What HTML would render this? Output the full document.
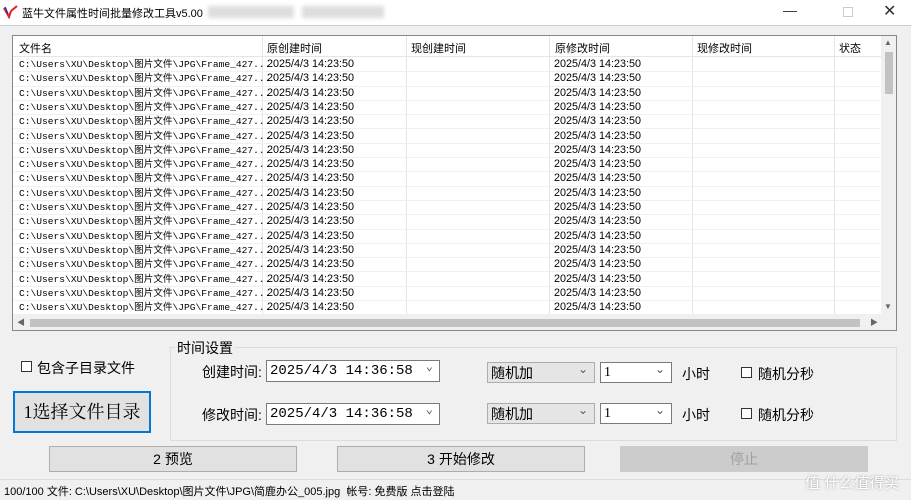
<!DOCTYPE html><html><head><meta charset="utf-8"><style>
*{margin:0;padding:0;box-sizing:border-box}
body{width:911px;height:500px;background:#f0f0f0;font-family:"Liberation Sans","Noto Sans CJK SC",sans-serif;position:relative;overflow:hidden;color:#000}
.a{position:absolute}
.t{font-size:12px;white-space:nowrap}
.row{position:absolute;left:0;height:14.3px;width:868px;border-bottom:1px solid #f0f0f0}
.cell{position:absolute;top:0;line-height:13px;white-space:nowrap}
.mono{font-family:"Liberation Mono","Noto Sans CJK SC",monospace;font-size:9.6px}
.dt{font-size:10.8px}
.btn{position:absolute;background:#e1e1e1;border:1px solid #adadad;font-size:14px;text-align:center}
.combo{position:absolute;background:#fff;border:1px solid #7a7a7a;font-size:14px;padding-left:3px;line-height:20px;font-family:"Liberation Mono","Noto Sans CJK SC",monospace}
.combo::after{content:"⌄";position:absolute;right:6px;top:-4px;font-size:12px;color:#555}
.cb{position:absolute;width:11px;height:11px;border:1px solid #333;background:#fff}
</style></head><body>
<div class="a" style="left:0;top:0;width:911px;height:25px;background:#fff"></div>
<svg class="a" style="left:3px;top:5px" width="16" height="14"><path d="M1 3 L6 12 L8 6 M8 6 L14 1" stroke="#d22" stroke-width="2" fill="none"/><path d="M2 2 L5 9" stroke="#23a" stroke-width="1.5"/></svg>
<div class="a t" style="left:22px;top:5px;font-size:11px">蓝牛文件属性时间批量修改工具v5.00</div>
<div class="a" style="left:208px;top:6px;width:86px;height:12px;background:#ddd;filter:blur(2px)"></div>
<div class="a" style="left:302px;top:6px;width:82px;height:12px;background:#ddd;filter:blur(2px)"></div>
<div class="a t" style="left:783px;top:2px;font-size:14px;color:#333">—</div>
<div class="a" style="left:843px;top:7px;width:10px;height:10px;border:1px solid #ccc"></div>
<div class="a t" style="left:883px;top:1px;font-size:16px;color:#333">✕</div>
<div class="a" style="left:0;top:25px;width:911px;height:1px;background:#ccc"></div>

<div class="a" style="left:12px;top:35px;width:885px;height:296px;background:#fff;border:1px solid #828790;overflow:hidden">
<div class="a" style="left:0;top:0;width:868px;height:21px;border-bottom:1px solid #e5e5e5">
<div class="a t" style="left:6px;top:4px;font-size:11px">文件名</div>
<div class="a t" style="left:254px;top:4px;font-size:11px">原创建时间</div>
<div class="a t" style="left:398px;top:4px;font-size:11px">现创建时间</div>
<div class="a t" style="left:542px;top:4px;font-size:11px">原修改时间</div>
<div class="a t" style="left:684px;top:4px;font-size:11px">现修改时间</div>
<div class="a t" style="left:826px;top:4px;font-size:11px">状态</div>
</div>
<div class="a" style="left:249px;top:0;width:1px;height:278px;background:#e5e5e5"></div>
<div class="a" style="left:393px;top:0;width:1px;height:278px;background:#e5e5e5"></div>
<div class="a" style="left:536px;top:0;width:1px;height:278px;background:#e5e5e5"></div>
<div class="a" style="left:679px;top:0;width:1px;height:278px;background:#e5e5e5"></div>
<div class="a" style="left:821px;top:0;width:1px;height:278px;background:#e5e5e5"></div>
<div id="rows"></div>
<div class="a" style="left:868px;top:0;width:16px;height:278px;background:#f0f0f0"></div>
<div class="a" style="left:872px;top:16px;width:8px;height:42px;background:#c2c2c2"></div>
<div class="a t" style="left:871px;top:2px;font-size:8px;color:#666">▲</div>
<div class="a t" style="left:871px;top:266px;font-size:8px;color:#666">▼</div>
<div class="a" style="left:0;top:278px;width:884px;height:17px;background:#f0f0f0"></div>
<div class="a" style="left:17px;top:283px;width:830px;height:8px;background:#c2c2c2"></div>
<div class="a t" style="left:4px;top:281px;font-size:8px;color:#666">◀</div>
<div class="a t" style="left:857px;top:281px;font-size:8px;color:#666">▶</div>
</div>

<div class="cb" style="left:21px;top:361px"></div>
<div class="a t" style="left:37px;top:358px;font-size:14px">包含子目录文件</div>
<div class="btn" style="left:13px;top:391px;width:138px;height:42px;border:2px solid #0078d7;font-family:'Liberation Serif','Noto Serif CJK SC',serif;font-size:18px;line-height:38px">1选择文件目录</div>

<div class="a" style="left:170px;top:347px;width:727px;height:94px;border:1px solid #dcdcdc"></div>
<div class="a t" style="left:175px;top:338px;font-size:14px;background:#f0f0f0;padding:0 2px">时间设置</div>
<div class="a t" style="left:202px;top:362px;font-size:14px">创建时间:</div>
<div class="combo" style="left:266px;top:360px;width:174px;height:22px">2025/4/3 14:36:58</div>
<div class="a t" style="left:202px;top:405px;font-size:14px">修改时间:</div>
<div class="combo" style="left:266px;top:403px;width:174px;height:22px">2025/4/3 14:36:58</div>
<div class="combo" style="left:487px;top:362px;width:108px;height:21px;background:#e5e5e5;border-color:#adadad;font-family:'Liberation Sans','Noto Sans CJK SC',sans-serif">随机加</div>
<div class="combo" style="left:600px;top:362px;width:72px;height:21px;font-family:'Liberation Serif',serif">1</div>
<div class="combo" style="left:487px;top:403px;width:108px;height:21px;background:#e5e5e5;border-color:#adadad;font-family:'Liberation Sans','Noto Sans CJK SC',sans-serif">随机加</div>
<div class="combo" style="left:600px;top:403px;width:72px;height:21px;font-family:'Liberation Serif',serif">1</div>
<div class="a t" style="left:682px;top:364px;font-size:14px">小时</div>
<div class="a t" style="left:682px;top:405px;font-size:14px">小时</div>
<div class="cb" style="left:741px;top:367px"></div><div class="a t" style="left:758px;top:364px;font-size:14px">随机分秒</div>
<div class="cb" style="left:741px;top:408px"></div><div class="a t" style="left:758px;top:405px;font-size:14px">随机分秒</div>

<div class="btn" style="left:49px;top:446px;width:248px;height:26px;line-height:24px">2 预览</div>
<div class="btn" style="left:337px;top:446px;width:248px;height:26px;line-height:24px">3 开始修改</div>
<div class="btn" style="left:620px;top:446px;width:248px;height:26px;line-height:24px;background:#cccccc;border-color:#cccccc;color:#a0a0a0">停止</div>

<div class="a" style="left:0;top:479px;width:911px;height:1px;background:#dcdcdc"></div>
<div class="a t" style="left:4px;top:483px;font-size:11px">100/100 文件: C:\Users\XU\Desktop\图片文件\JPG\简鹿办公_005.jpg&nbsp; 帐号: 免费版 点击登陆</div>
<div class="a t" style="left:805px;top:472px;font-size:15px;color:#fff;text-shadow:0 0 2px #999">值 什么值得买</div>
<script>
var h='';for(var i=0;i<18;i++){var y=22+i*14.3;h+='<div class="row" style="top:'+y+'px"><div class="cell mono" style="left:6px">C:\\Users\\XU\\Desktop\\图片文件\\JPG\\Frame_427...</div><div class="cell dt" style="left:254px">2025/4/3 14:23:50</div><div class="cell dt" style="left:541px">2025/4/3 14:23:50</div></div>';}
document.getElementById('rows').innerHTML=h;
</script>
</body></html>
